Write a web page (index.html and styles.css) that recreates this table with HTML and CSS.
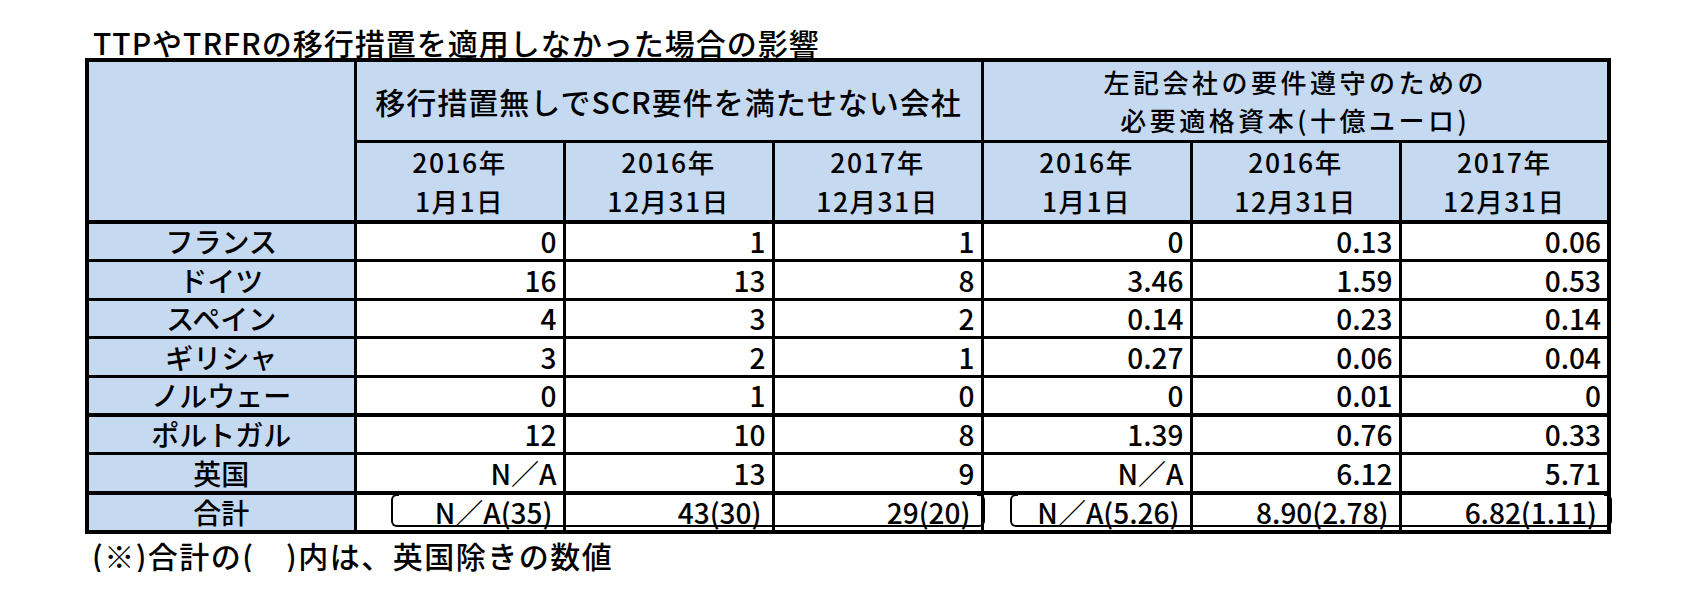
FILE: index.html
```html
<!DOCTYPE html>
<html lang="ja">
<head>
<meta charset="utf-8">
<title>TTPやTRFRの移行措置を適用しなかった場合の影響</title>
<link rel="stylesheet" href="styles.css">
</head>
<body>
<div class="sheet">
  <div class="title">TTPやTRFRの移行措置を適用しなかった場合の影響</div>
  <div class="table-wrap">
    <table class="grid">
      <colgroup>
        <col class="c-name">
        <col class="c-val"><col class="c-val"><col class="c-val">
        <col class="c-val"><col class="c-val"><col class="c-val">
      </colgroup>
      <thead>
        <tr class="h1">
          <th rowspan="2" class="corner"></th>
          <th colspan="3" class="one">移行措置無しでSCR要件を満たせない会社</th>
          <th colspan="3" class="two">左記会社の要件遵守のための<br>必要適格資本(十億ユーロ)</th>
        </tr>
        <tr class="h2">
          <th>2016年<br>1月1日</th>
          <th>2016年<br>12月31日</th>
          <th>2017年<br>12月31日</th>
          <th>2016年<br>1月1日</th>
          <th>2016年<br>12月31日</th>
          <th>2017年<br>12月31日</th>
        </tr>
      </thead>
      <tbody>
        <tr><th>フランス</th><td>0</td><td>1</td><td>1</td><td>0</td><td>0.13</td><td>0.06</td></tr>
        <tr><th>ドイツ</th><td>16</td><td>13</td><td>8</td><td>3.46</td><td>1.59</td><td>0.53</td></tr>
        <tr><th>スペイン</th><td>4</td><td>3</td><td>2</td><td>0.14</td><td>0.23</td><td>0.14</td></tr>
        <tr><th>ギリシャ</th><td>3</td><td>2</td><td>1</td><td>0.27</td><td>0.06</td><td>0.04</td></tr>
        <tr><th>ノルウェー</th><td>0</td><td>1</td><td>0</td><td>0</td><td>0.01</td><td>0</td></tr>
        <tr class="thick-top"><th>ポルトガル</th><td>12</td><td>10</td><td>8</td><td>1.39</td><td>0.76</td><td>0.33</td></tr>
        <tr><th>英国</th><td>N／A</td><td>13</td><td>9</td><td>N／A</td><td>6.12</td><td>5.71</td></tr>
        <tr class="total"><th>合計</th><td>N／A(35)</td><td>43(30)</td><td>29(20)</td><td>N／A(5.26)</td><td>8.90(2.78)</td><td>6.82(1.11)</td></tr>
      </tbody>
    </table>
    <div class="bracket b1"><span class="bl"></span><span class="br"></span></div>
    <div class="bracket b2"><span class="bl"></span><span class="br"></span></div>
  </div>
  <div class="note">(※)合計の(　)内は、英国除きの数値</div>
</div>
</body>
</html>
```

FILE: styles.css
```css
html, body {
  margin: 0;
  padding: 0;
  background: #ffffff;
}

body {
  font-family: "Noto Sans CJK JP", "Noto Sans", sans-serif;
  font-weight: 500;
  color: #000000;
}

.sheet {
  padding-left: 85px;
}

.title {
  margin-top: 24px;
  height: 34px;
  line-height: 36px;
  font-size: 30px;
  letter-spacing: 1px;
  padding-left: 8px;
  white-space: nowrap;
}

.table-wrap {
  position: relative;
  width: 1522px;
}

.grid {
  border-collapse: collapse;
  table-layout: fixed;
  width: 1522px;
  border: 4px solid #000;
}

.c-name { width: 268px; }
.c-val { width: 209px; }

.grid th,
.grid td {
  border: 3px solid #000;
  padding: 0;
  white-space: nowrap;
  overflow: visible;
}

.grid thead th {
  background: #c5d9f1;
  font-weight: 500;
  text-align: center;
}

.grid .h1 th {
  height: 78px;
  vertical-align: middle;
}

.grid .h1 th.one {
  font-size: 30px;
  line-height: 44px;
  letter-spacing: 1px;
}

.grid .h1 th.two {
  font-size: 26px;
  line-height: 38px;
  letter-spacing: 3.5px;
}

.grid .h2 th {
  height: 74px;
  font-size: 26.5px;
  letter-spacing: 1.5px;
  line-height: 38.5px;
  vertical-align: bottom;
  border-bottom-width: 4px;
}

.grid thead th.corner {
  border-bottom-width: 4px;
}

.grid tbody th {
  background: #c5d9f1;
  font-weight: 500;
  font-size: 28px;
  text-align: center;
  height: 35.4px;
  line-height: 35px;
  vertical-align: bottom;
}

.grid tbody td {
  background: #ffffff;
  font-size: 28px;
  text-align: right;
  padding-right: 6px;
  height: 35.4px;
  line-height: 35px;
  vertical-align: bottom;
}

.grid tr.thick-top th,
.grid tr.thick-top td,
.grid tr.total th,
.grid tr.total td {
  border-top-width: 4px;
}

.grid tr.total td {
  padding-right: 10px;
}

.bracket {
  position: absolute;
  top: 436px;
  height: 33px;
}

.bracket::after {
  content: "";
  position: absolute;
  left: 6px;
  right: 6px;
  bottom: 0;
  border-bottom: 2px solid #000;
}

.bracket .bl,
.bracket .br {
  position: absolute;
  top: 0;
  bottom: 0;
  width: 8px;
  border: 2px solid #000;
  box-sizing: border-box;
}

.bracket .bl {
  left: 0;
  border-right: none;
  border-radius: 6px 0 0 6px;
}

.bracket .br {
  right: 0;
  border-left: none;
  border-radius: 0 6px 6px 0;
}

.b1 {
  left: 306px;
  width: 594px;
}

.b2 {
  left: 925px;
  width: 602px;
}

.note {
  margin-top: 4px;
  padding-left: 7px;
  font-size: 30px;
  letter-spacing: 1.5px;
  line-height: 34px;
  white-space: nowrap;
}
```
